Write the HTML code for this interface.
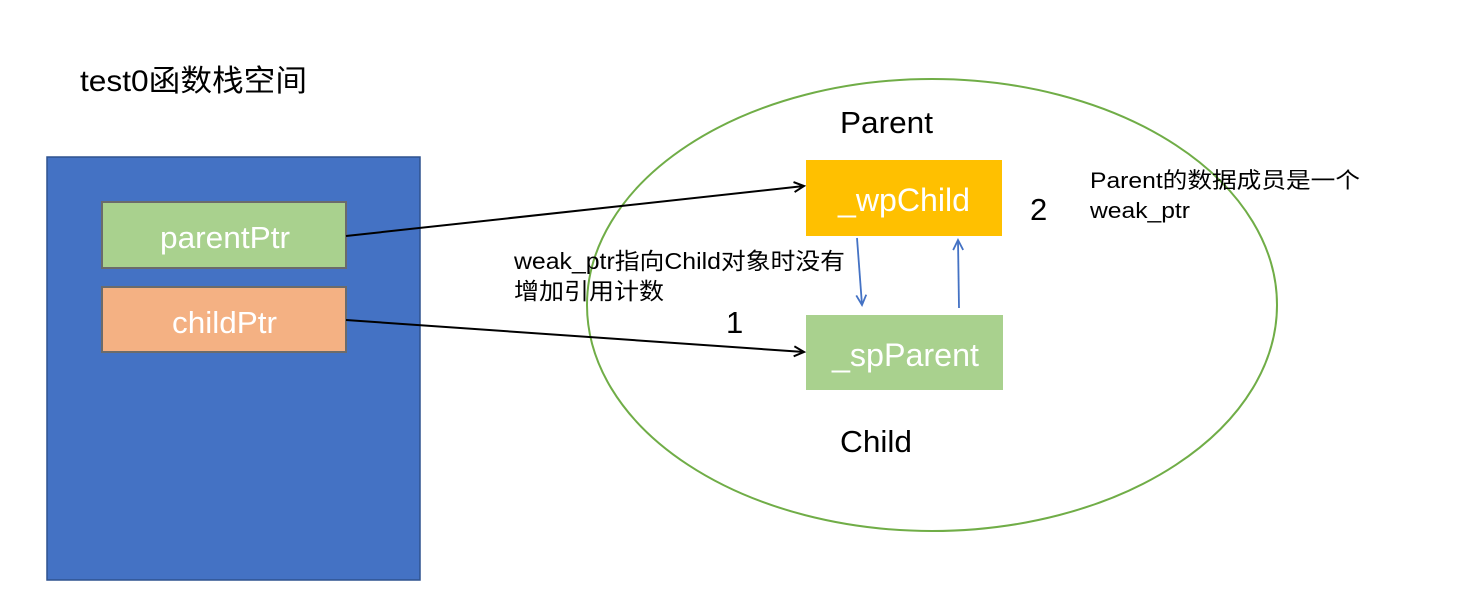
<!DOCTYPE html>
<html><head><meta charset="utf-8"><style>
html,body{margin:0;padding:0;background:#fff;width:1467px;height:607px;overflow:hidden}
svg text{font-family:"Liberation Sans","Noto Sans CJK SC",sans-serif}
</style></head><body>
<svg width="1467" height="607" viewBox="0 0 1467 607" xmlns="http://www.w3.org/2000/svg">
<defs>
<marker id="ab" markerWidth="14" markerHeight="14" refX="11" refY="6" orient="auto" markerUnits="userSpaceOnUse"><path d="M1,1 L11,6 L1,11" fill="none" stroke="#000" stroke-width="2"/></marker>
<marker id="au" markerWidth="14" markerHeight="14" refX="11" refY="6" orient="auto" markerUnits="userSpaceOnUse"><path d="M1,1 L11,6 L1,11" fill="none" stroke="#4472C4" stroke-width="1.8"/></marker>
</defs>
<text x="80" y="91" font-size="30" fill="#000" textLength="227" lengthAdjust="spacingAndGlyphs">test0函数栈空间</text>
<rect x="47" y="157" width="373" height="423" fill="#4472C4" stroke="#2F528F" stroke-width="1.5"/>
<rect x="102" y="202" width="244" height="66" fill="#A9D18E" stroke="#6b6b6b" stroke-width="2"/>
<text x="160" y="248" font-size="31" fill="#fff" textLength="130" lengthAdjust="spacingAndGlyphs">parentPtr</text>
<rect x="102" y="287" width="244" height="65" fill="#F4B183" stroke="#6b6b6b" stroke-width="2"/>
<text x="172" y="333" font-size="31" fill="#fff" textLength="105" lengthAdjust="spacingAndGlyphs">childPtr</text>
<ellipse cx="932" cy="305" rx="345" ry="226" fill="none" stroke="#70AD47" stroke-width="2"/>
<text x="840" y="133" font-size="31" fill="#000" textLength="93" lengthAdjust="spacingAndGlyphs">Parent</text>
<text x="840" y="452" font-size="31" fill="#000" textLength="72" lengthAdjust="spacingAndGlyphs">Child</text>
<rect x="806" y="160" width="196" height="76" fill="#FFC000"/>
<text x="838" y="211" font-size="32" fill="#fff" textLength="132" lengthAdjust="spacingAndGlyphs">_wpChild</text>
<rect x="806" y="315" width="197" height="75" fill="#A9D18E"/>
<text x="832" y="366" font-size="32" fill="#fff" textLength="147" lengthAdjust="spacingAndGlyphs">_spParent</text>
<text x="1030" y="220" font-size="31" fill="#000">2</text>
<text x="726" y="333" font-size="31" fill="#000">1</text>
<line x1="346" y1="236" x2="804" y2="186" stroke="#000" stroke-width="2" marker-end="url(#ab)"/>
<line x1="346" y1="320" x2="804" y2="352" stroke="#000" stroke-width="2" marker-end="url(#ab)"/>
<line x1="857" y1="238" x2="862" y2="305" stroke="#4472C4" stroke-width="1.8" marker-end="url(#au)"/>
<line x1="959" y1="308" x2="958" y2="240" stroke="#4472C4" stroke-width="1.8" marker-end="url(#au)"/>
<text x="514" y="269" font-size="23" fill="#000" textLength="331" lengthAdjust="spacingAndGlyphs">weak_ptr指向Child对象时没有</text>
<text x="514" y="299" font-size="23" fill="#000" textLength="150" lengthAdjust="spacingAndGlyphs">增加引用计数</text>
<text x="1090" y="188" font-size="22" fill="#000" textLength="270" lengthAdjust="spacingAndGlyphs">Parent的数据成员是一个</text>
<text x="1090" y="218" font-size="22" fill="#000" textLength="100" lengthAdjust="spacingAndGlyphs">weak_ptr</text>
</svg>
</body></html>
